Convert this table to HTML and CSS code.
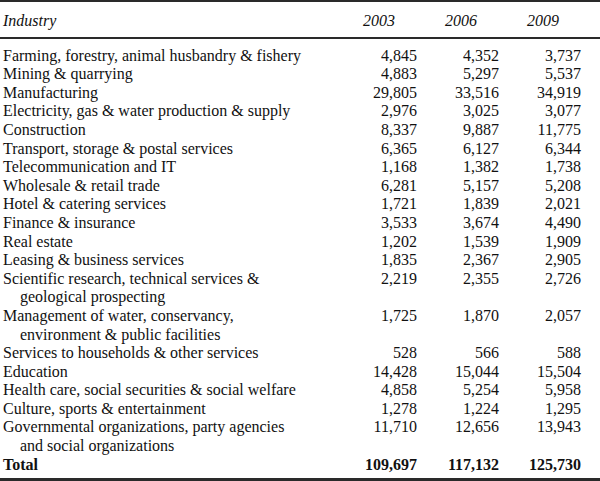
FILE: index.html
```html
<!DOCTYPE html>
<html>
<head>
<meta charset="utf-8">
<link rel="stylesheet" href="styles.css">
</head>
<body>
<table class="data">
  <colgroup>
    <col class="c-name">
    <col class="c-num">
    <col class="c-num">
    <col class="c-num">
    <col class="c-pad">
  </colgroup>
  <thead>
    <tr>
      <th class="name">Industry</th>
      <th class="year">2003</th>
      <th class="year">2006</th>
      <th class="year">2009</th>
      <th></th>
    </tr>
  </thead>
  <tbody>
    <tr class="first"><td class="name">Farming, forestry, animal husbandry &amp; fishery</td><td>4,845</td><td>4,352</td><td>3,737</td><td></td></tr>
    <tr><td class="name">Mining &amp; quarrying</td><td>4,883</td><td>5,297</td><td>5,537</td><td></td></tr>
    <tr><td class="name">Manufacturing</td><td>29,805</td><td>33,516</td><td>34,919</td><td></td></tr>
    <tr><td class="name">Electricity, gas &amp; water production &amp; supply</td><td>2,976</td><td>3,025</td><td>3,077</td><td></td></tr>
    <tr><td class="name">Construction</td><td>8,337</td><td>9,887</td><td>11,775</td><td></td></tr>
    <tr><td class="name">Transport, storage &amp; postal services</td><td>6,365</td><td>6,127</td><td>6,344</td><td></td></tr>
    <tr><td class="name">Telecommunication and IT</td><td>1,168</td><td>1,382</td><td>1,738</td><td></td></tr>
    <tr><td class="name">Wholesale &amp; retail trade</td><td>6,281</td><td>5,157</td><td>5,208</td><td></td></tr>
    <tr><td class="name">Hotel &amp; catering services</td><td>1,721</td><td>1,839</td><td>2,021</td><td></td></tr>
    <tr><td class="name">Finance &amp; insurance</td><td>3,533</td><td>3,674</td><td>4,490</td><td></td></tr>
    <tr><td class="name">Real estate</td><td>1,202</td><td>1,539</td><td>1,909</td><td></td></tr>
    <tr><td class="name">Leasing &amp; business services</td><td>1,835</td><td>2,367</td><td>2,905</td><td></td></tr>
    <tr><td class="name">Scientific research, technical services &amp;<br>geological prospecting</td><td>2,219</td><td>2,355</td><td>2,726</td><td></td></tr>
    <tr><td class="name">Management of water, conservancy,<br>environment &amp; public facilities</td><td>1,725</td><td>1,870</td><td>2,057</td><td></td></tr>
    <tr><td class="name">Services to households &amp; other services</td><td>528</td><td>566</td><td>588</td><td></td></tr>
    <tr><td class="name">Education</td><td>14,428</td><td>15,044</td><td>15,504</td><td></td></tr>
    <tr><td class="name">Health care, social securities &amp; social welfare</td><td>4,858</td><td>5,254</td><td>5,958</td><td></td></tr>
    <tr><td class="name">Culture, sports &amp; entertainment</td><td>1,278</td><td>1,224</td><td>1,295</td><td></td></tr>
    <tr><td class="name">Governmental organizations, party agencies<br>and social organizations</td><td>11,710</td><td>12,656</td><td>13,943</td><td></td></tr>
    <tr class="total"><td class="name">Total</td><td>109,697</td><td>117,132</td><td>125,730</td><td></td></tr>
  </tbody>
</table>
</body>
</html>
```
FILE: styles.css
```css
html, body {
  margin: 0;
  padding: 0;
  background: #ffffff;
}

.data {
  width: 600px;
  border-collapse: collapse;
  table-layout: fixed;
  font-family: "Liberation Serif", "Times New Roman", serif;
  font-size: 16px;
  line-height: 18.6px;
  color: #111111;
  border-top: 2px solid #2a2a2a;
  border-bottom: 3px solid #2a2a2a;
}

.c-name { width: 335px; }
.c-num { width: 82px; }
.c-pad { width: 19px; }

.data th,
.data td {
  padding: 0;
  text-align: right;
  vertical-align: top;
  white-space: nowrap;
}

.data thead th {
  font-weight: normal;
  font-style: italic;
  padding-top: 9.5px;
  padding-bottom: 7px;
  border-bottom: 2px solid #2a2a2a;
}

.data th.year {
  padding-right: 22px;
}

.data .name {
  text-align: left;
  padding-left: 20px;
  text-indent: -17px;
}

.data tr.first td {
  padding-top: 7.5px;
}

.data tr.total td {
  font-weight: bold;
  padding-bottom: 4px;
}
```
